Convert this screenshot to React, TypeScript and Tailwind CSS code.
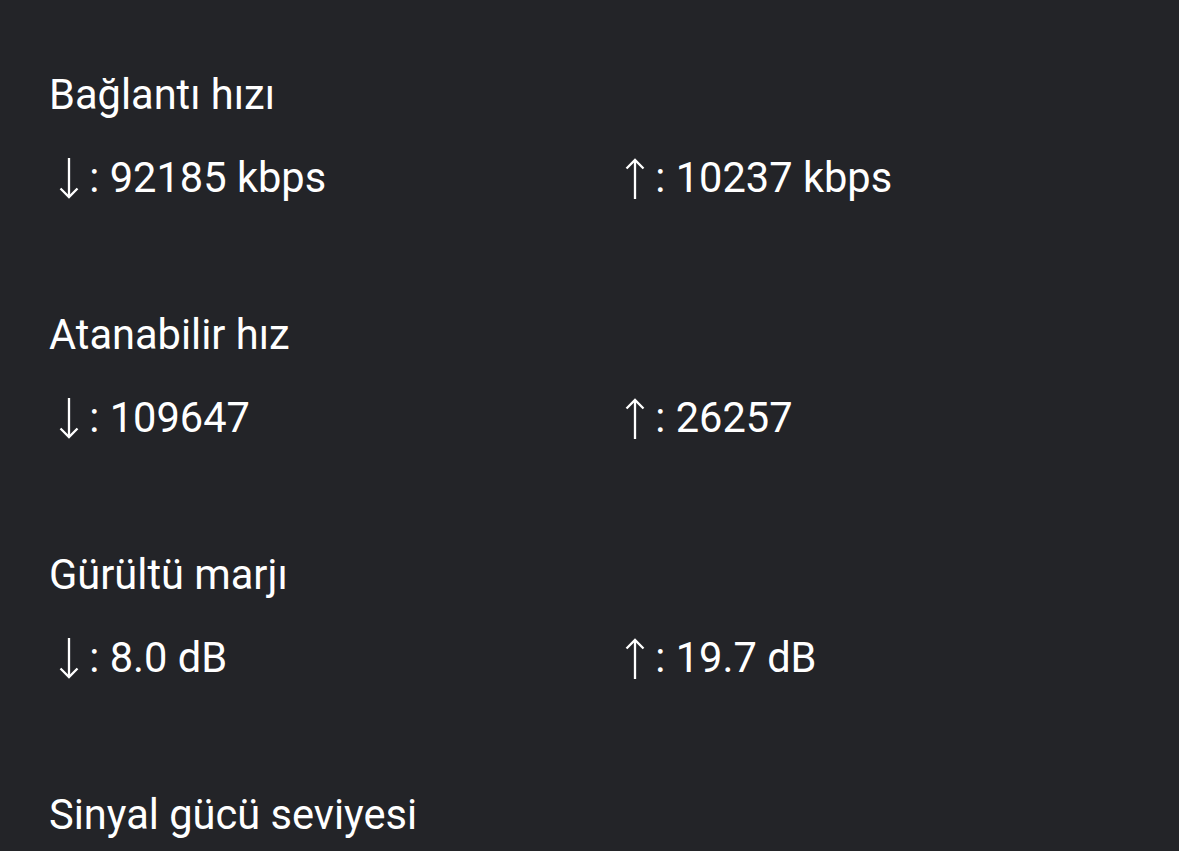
import React from "react"

const rows = [
  { title: "Bağlantı hızı", down: "92185 kbps", up: "10237 kbps" },
  { title: "Atanabilir hız", down: "109647", up: "26257" },
  { title: "Gürültü marjı", down: "8.0 dB", up: "19.7 dB" },
  { title: "Sinyal gücü seviyesi" },
]

function Arrow({ up }: { up?: boolean }) {
  return (
    <svg width="20" height="41" viewBox="0 0 20 41" fill="none" stroke="white" strokeWidth="2.3" className={up ? "rotate-180" : ""}>
      <path d="M10 0V39" />
      <path d="M1.5 30.5L10 39L18.5 30.5" />
    </svg>
  )
}

export default function App() {
  return (
    <div className="h-[851px] w-[1179px] overflow-hidden bg-[#232428] pl-[49px] pt-[70px] text-white font-['Roboto',sans-serif]">
      {rows.map((r) => (
        <div key={r.title} className="h-[240px]">
          <div className="text-[41.6px] leading-[50px]">{r.title}</div>
          {r.down && (
            <div className="mt-[33px] flex text-[41.6px] leading-[50px]">
              <div className="flex w-[566px] items-center pl-[10px]">
                <Arrow />
                <span className="whitespace-pre"> : {r.down}</span>
              </div>
              <div className="flex items-center pl-[10px]">
                <Arrow up />
                <span className="whitespace-pre"> : {r.up}</span>
              </div>
            </div>
          )}
        </div>
      ))}
    </div>
  )
}
